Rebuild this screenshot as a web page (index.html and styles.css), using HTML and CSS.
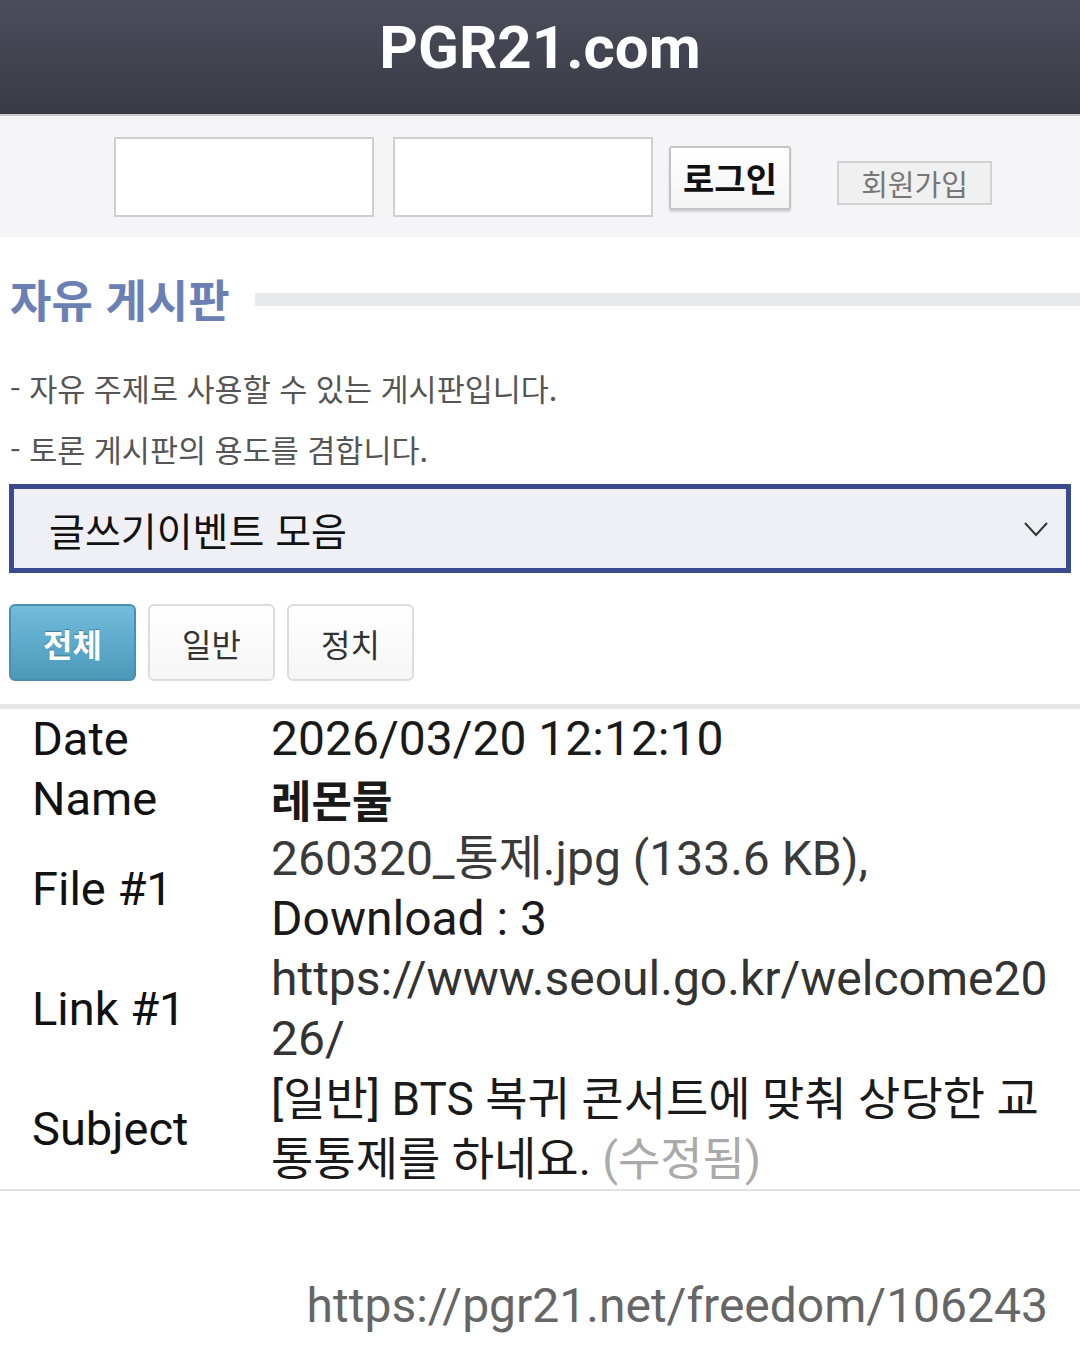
FILE: index.html
```html
<!DOCTYPE html>
<html lang="ko">
<head>
    <meta charset="UTF-8">
    <meta name="viewport" content="width=device-width, initial-scale=1.0">
    <title>자유 게시판 - PGR21.com</title>
    <link rel="stylesheet" href="styles.css">
</head>
<body>
    <div class="header">PGR21.com</div>
    <div class="login">
        <input class="login-input" type="text">
        <input class="login-input" type="password">
        <button class="btn-login">로그인</button>
        <button class="btn-join">회원가입</button>
    </div>

    <div class="board-title">
        <h1>자유 게시판</h1>
        <div class="title-line"></div>
    </div>
    <p class="desc">- 자유 주제로 사용할 수 있는 게시판입니다.</p>
    <p class="desc">- 토론 게시판의 용도를 겸합니다.</p>

    <div class="select">
        <span>글쓰기이벤트 모음</span>
        <svg class="chevron" width="24" height="16" viewBox="0 0 24 16">
            <path d="M1 2 L12 14 L23 2" fill="none" stroke="#333" stroke-width="2"/>
        </svg>
    </div>

    <div class="cats">
        <a class="cat active">전체</a>
        <a class="cat">일반</a>
        <a class="cat">정치</a>
    </div>

    <div class="info">
        <div class="row">
            <div class="label">Date</div>
            <div class="value">2026/03/20 12:12:10</div>
        </div>
        <div class="row">
            <div class="label">Name</div>
            <div class="value name">레몬물</div>
        </div>
        <div class="row">
            <div class="label">File #1</div>
            <div class="value"><span class="file">260320_통제.jpg (133.6 KB),</span> Download : 3</div>
        </div>
        <div class="row">
            <div class="label">Link #1</div>
            <div class="value link">https://www.seoul.go.kr/welcome2026/</div>
        </div>
        <div class="row">
            <div class="label">Subject</div>
            <div class="value subject">[일반] BTS 복귀 콘서트에 맞춰 상당한 교통통제를 하네요. <span class="edited">(수정됨)</span></div>
        </div>
    </div>

    <div class="footer-url">https://pgr21.net/freedom/106243</div>
</body>
</html>
```

FILE: styles.css
```css
html, body {
    margin: 0;
    padding: 0;
}
body {
    width: 1080px;
    background-color: #fff;
    font-family: Roboto, "Noto Sans CJK KR", sans-serif;
    color: #222;
}
.header {
    height: 114px;
    line-height: 96px;
    text-align: center;
    color: #fff;
    font-size: 60px;
    font-weight: bold;
    background: linear-gradient(#4b4e5a, #383a46);
    border-bottom: 2px solid #c9cbd0;
}
.login {
    display: flex;
    align-items: center;
    height: 121px;
    padding-left: 114px;
    background-color: #f5f5f7;
}
.login-input {
    width: 260px;
    height: 80px;
    margin: 0 19px 0 0;
    padding: 0;
    box-sizing: border-box;
    border: 2px solid #cfcfcf;
    background-color: #fff;
}
.login-input + .login-input {
    margin-right: 16px;
}
.btn-login {
    width: 122px;
    height: 64px;
    padding: 0;
    border: 2px solid #c4c4c4;
    border-radius: 3px;
    background: linear-gradient(#fff, #f4f4f4);
    box-shadow: 0 2px 2px rgba(0, 0, 0, 0.15);
    font-family: "Noto Sans CJK KR", sans-serif;
    font-size: 34px;
    font-weight: bold;
    color: #111;
    margin-top: 2px;
}
.btn-join {
    width: 155px;
    height: 44px;
    margin: 12px 0 0 46px;
    padding: 0;
    border: 2px solid #d2d2d2;
    background-color: #f0f0f0;
    font-family: "Noto Sans CJK KR", sans-serif;
    font-size: 29px;
    line-height: 40px;
    color: #777;
}

.board-title {
    display: flex;
    align-items: center;
    margin-top: 37px;
    padding-left: 10px;
}
.board-title h1 {
    margin: 0;
    font-family: "Noto Sans CJK KR", sans-serif;
    font-size: 45px;
    line-height: 50px;
    font-weight: bold;
    color: #6a80b4;
}
.title-line {
    flex: 1;
    height: 13px;
    margin-left: 25px;
    background-color: #e8e9ec;
}
.desc {
    margin: 0;
    padding-left: 10px;
    font-family: "Noto Sans CJK KR", sans-serif;
    font-size: 30.5px;
    line-height: 61px;
    color: #555;
}
.desc:first-of-type {
    margin-top: 34px;
}

.select {
    display: flex;
    align-items: center;
    justify-content: space-between;
    height: 89px;
    margin: 4px 9px 0 9px;
    padding: 0 18px 0 35px;
    box-sizing: border-box;
    border: 5px solid #3a4a8f;
    background-color: #eff0f5;
    font-family: "Noto Sans CJK KR", sans-serif;
    font-size: 39px;
    color: #111;
}

.cats {
    display: flex;
    gap: 12px;
    padding: 31px 0 0 9px;
}
.cat {
    display: flex;
    align-items: center;
    justify-content: center;
    width: 127px;
    height: 77px;
    box-sizing: border-box;
    border: 2px solid #dcdcdc;
    border-radius: 6px;
    background: linear-gradient(#fff, #f6f6f6);
    font-family: "Noto Sans CJK KR", sans-serif;
    font-size: 32px;
    color: #333;
}
.cat.active {
    border-color: #4a8fb0;
    background: linear-gradient(#72bddc, #4b98b9);
    color: #fff;
    font-weight: bold;
    text-shadow: 0 -1px 1px rgba(0, 0, 0, 0.3);
}

.info {
    margin-top: 23px;
    border-top: 5px solid #e6e6e6;
    border-bottom: 2px solid #e2e2e2;
}
.row {
    display: flex;
    align-items: center;
}
.label {
    width: 239px;
    flex: none;
    padding-left: 32px;
    font-size: 47px;
    line-height: 60px;
    color: #111;
}
.value {
    width: 790px;
    font-size: 48px;
    line-height: 60px;
    color: #1a1a1a;
}
.value.name {
    font-weight: bold;
    font-family: "Noto Sans CJK KR", sans-serif;
    font-size: 44px;
}
.file {
    color: #3a3a3a;
}
.link {
    width: 785px;
    word-break: break-all;
    color: #333;
}
.subject {
    width: 800px;
    font-size: 46px;
}
.edited {
    color: #aaa;
}

.footer-url {
    margin-top: 85px;
    padding-right: 32px;
    text-align: right;
    font-size: 48px;
    line-height: 60px;
    color: #666;
}
```
